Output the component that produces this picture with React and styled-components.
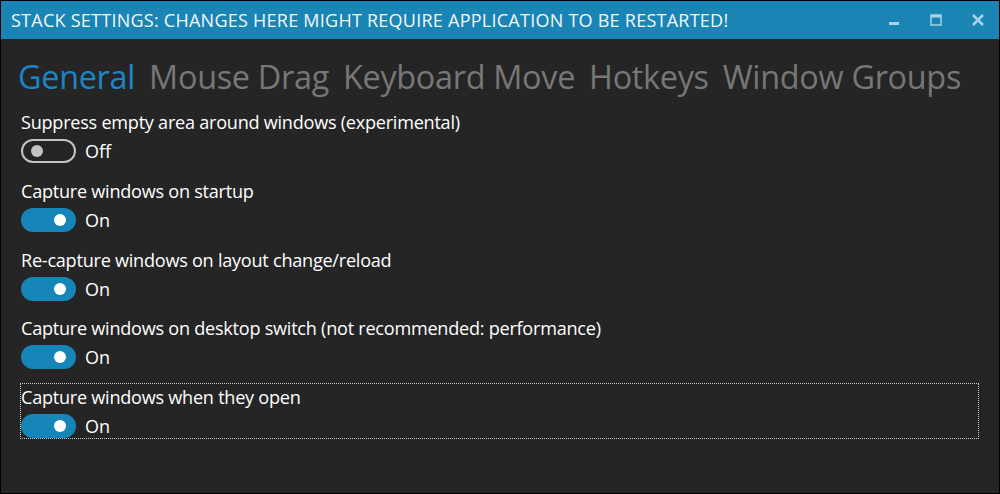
import styled, { createGlobalStyle } from "styled-components";

const GlobalStyle = createGlobalStyle`
  html, body {
    margin: 0;
    padding: 0;
    background: #000;
  }
  * {
    box-sizing: border-box;
  }
`;

const WindowFrame = styled.div`
  width: 1000px;
  height: 494px;
  border: 1px solid #000;
  background-color: #252525;
  display: flex;
  flex-direction: column;
  font-family: "Open Sans", "Noto Sans", sans-serif;
  color: #fff;
`;

const TitleBar = styled.div`
  height: 38px;
  flex-shrink: 0;
  display: flex;
  align-items: center;
  justify-content: space-between;
  padding: 0 0 0 10px;
  background-color: #1a84b4;
`;

const TitleText = styled.div`
  font-size: 18px;
  letter-spacing: 0.25px;
  color: #f4f8fa;
  white-space: nowrap;
`;

const CaptionButtons = styled.div`
  display: flex;
  align-items: center;
  height: 100%;
`;

const CaptionButton = styled.div`
  width: 42px;
  height: 100%;
  display: flex;
  align-items: center;
  justify-content: center;
  color: #a9d3e6;
`;

const Content = styled.div`
  flex: 1;
  padding: 0 21px 0 19px;
  display: flex;
  flex-direction: column;
`;

const Tabs = styled.div`
  display: flex;
  gap: 14px;
  height: 69px;
  align-items: center;
  padding-top: 5px;
  margin-left: -2px;
`;

const Tab = styled.div`
  font-size: 32.4px;
  letter-spacing: -0.3px;
  color: ${props => (props.active ? "#1a86c6" : "#777777")};
  white-space: nowrap;
`;

const SettingList = styled.div`
  display: flex;
  flex-direction: column;
  gap: 12.75px;
`;

const SettingItem = styled.div`
  width: 959px;
  height: 56px;
  border: 1px dotted ${props => (props.focused ? "#d0d0d0" : "transparent")};
  display: flex;
  flex-direction: column;
`;

const SettingLabel = styled.div`
  height: 30px;
  line-height: 26px;
  font-size: 18.1px;
  letter-spacing: -0.25px;
  white-space: nowrap;
`;

const ToggleRow = styled.div`
  display: flex;
  align-items: center;
  gap: 9px;
  height: 24px;
`;

const ToggleTrack = styled.div`
  width: 55px;
  height: 24px;
  border-radius: 12px;
  display: flex;
  align-items: center;
  justify-content: ${props => (props.on ? "flex-end" : "flex-start")};
  padding: 0 8px;
  background-color: ${props => (props.on ? "#1685b8" : "transparent")};
  border: 2px solid ${props => (props.on ? "#1685b8" : "#c4c4c4")};
`;

const ToggleKnob = styled.div`
  width: 12px;
  height: 12px;
  border-radius: 50%;
  background-color: ${props => (props.on ? "#ffffff" : "#c4c4c4")};
`;

const ToggleText = styled.span`
  font-size: 18px;
  color: #fff;
`;

const tabs = [
  "General",
  "Mouse Drag",
  "Keyboard Move",
  "Hotkeys",
  "Window Groups"
];

const settings = [
  { label: "Suppress empty area around windows (experimental)", on: false },
  { label: "Capture windows on startup", on: true },
  { label: "Re-capture windows on layout change/reload", on: true },
  {
    label: "Capture windows on desktop switch (not recommended: performance)",
    on: true
  },
  { label: "Capture windows when they open", on: true, focused: true }
];

const App = () => {
  return (
    <>
      <GlobalStyle />
      <WindowFrame>
        <TitleBar>
          <TitleText>
            STACK SETTINGS: CHANGES HERE MIGHT REQUIRE APPLICATION TO BE
            RESTARTED!
          </TitleText>
          <CaptionButtons>
            <CaptionButton>
              <svg width="12" height="12" viewBox="0 0 12 12">
                <rect x="1" y="8" width="10" height="3" fill="currentColor" />
              </svg>
            </CaptionButton>
            <CaptionButton>
              <svg width="12" height="12" viewBox="0 0 12 12">
                <rect
                  x="1"
                  y="1"
                  width="10"
                  height="10"
                  fill="none"
                  stroke="currentColor"
                  strokeWidth="1.4"
                />
                <rect x="1" y="1" width="10" height="2.5" fill="currentColor" />
              </svg>
            </CaptionButton>
            <CaptionButton>
              <svg width="14" height="14" viewBox="0 0 14 14">
                <path
                  d="M2 2 L12 12 M12 2 L2 12"
                  stroke="currentColor"
                  strokeWidth="2.6"
                />
              </svg>
            </CaptionButton>
          </CaptionButtons>
        </TitleBar>
        <Content>
          <Tabs>
            {tabs.map((t, i) => (
              <Tab key={t} active={i === 0}>
                {t}
              </Tab>
            ))}
          </Tabs>
          <SettingList>
            {settings.map(s => (
              <SettingItem key={s.label} focused={s.focused}>
                <SettingLabel>{s.label}</SettingLabel>
                <ToggleRow>
                  <ToggleTrack on={s.on}>
                    <ToggleKnob on={s.on} />
                  </ToggleTrack>
                  <ToggleText>{s.on ? "On" : "Off"}</ToggleText>
                </ToggleRow>
              </SettingItem>
            ))}
          </SettingList>
        </Content>
      </WindowFrame>
    </>
  );
};

export default App;
